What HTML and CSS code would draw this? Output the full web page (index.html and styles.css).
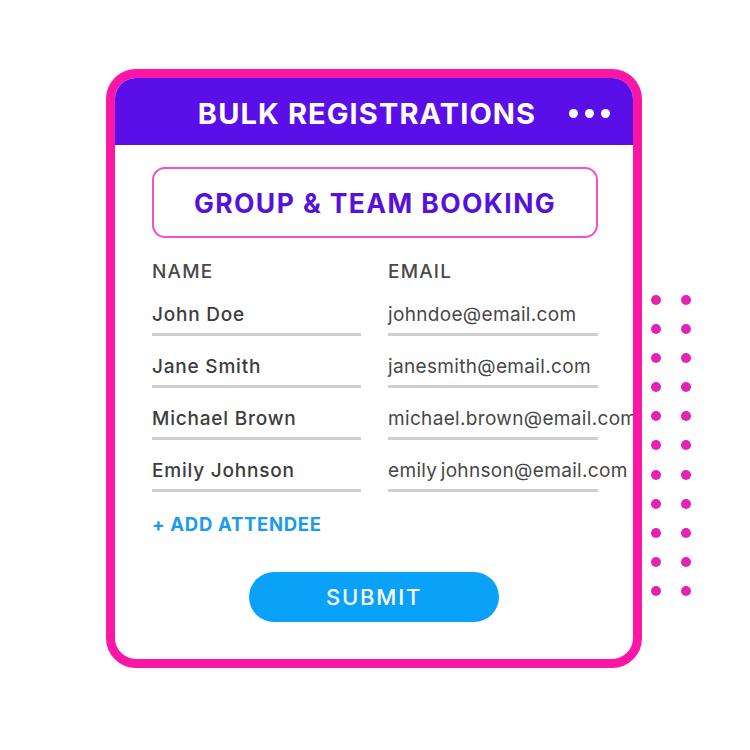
FILE: index.html
```html
<!DOCTYPE html>
<html>
<head>
<meta charset="utf-8">
<link rel="stylesheet" href="styles.css">
</head>
<body>
<div class="stage">
  <div class="card">
    <div class="header">
      <div class="title">BULK REGISTRATIONS</div>
      <div class="menu"><span></span><span></span><span></span></div>
    </div>
    <div class="body">
      <div class="badge">GROUP &amp; TEAM BOOKING</div>
      <div class="table">
        <div class="row head"><div class="cell">NAME</div><div class="cell">EMAIL</div></div>
        <div class="row"><div class="cell name">John Doe</div><div class="cell email">johndoe@email.com</div></div>
        <div class="row"><div class="cell name">Jane Smith</div><div class="cell email">janesmith@email.com</div></div>
        <div class="row"><div class="cell name">Michael Brown</div><div class="cell email">michael.brown@email.com</div></div>
        <div class="row"><div class="cell name">Emily Johnson</div><div class="cell email">emily<span class="tight"> </span>johnson@email.com</div></div>
        <div class="add">+ ADD ATTENDEE</div>
      </div>
      <div class="submit-wrap"><div class="submit">SUBMIT</div></div>
    </div>
  </div>
  <div class="dots">
    <span></span><span></span><span></span><span></span><span></span><span></span>
    <span></span><span></span><span></span><span></span><span></span><span></span>
    <span></span><span></span><span></span><span></span><span></span><span></span>
    <span></span><span></span><span></span><span></span>
  </div>
</div>
</body>
</html>
```

FILE: styles.css
```css
html, body {
  margin: 0;
  padding: 0;
  background: #ffffff;
}
body {
  font-family: Inter, "Open Sans", sans-serif;
}
.stage {
  position: relative;
  width: 750px;
  height: 750px;
  padding-top: 69px;
  padding-left: 106px;
  box-sizing: border-box;
}
.card {
  width: 536px;
  height: 599px;
  box-sizing: border-box;
  border: 9px solid #fb16a6;
  border-radius: 30px;
  background: #ffffff;
  overflow: hidden;
  display: flex;
  flex-direction: column;
}
.header {
  height: 67px;
  box-sizing: border-box;
  padding-top: 3px;
  background: #5a0fe8;
  display: flex;
  align-items: center;
  justify-content: center;
  position: relative;
  padding-right: 14px;
}
.title {
  color: #ffffff;
  font-weight: 700;
  font-size: 29px;
  letter-spacing: 1.1px;
}
.menu {
  position: absolute;
  right: 23px;
  top: 31px;
  display: flex;
  gap: 7px;
}
.menu span {
  width: 9px;
  height: 9px;
  border-radius: 50%;
  background: #ffffff;
}
.body {
  padding: 22px 35px 0 37px;
  display: flex;
  flex-direction: column;
}
.badge {
  height: 71px;
  box-sizing: border-box;
  border: 2.5px solid #f24ed6;
  border-radius: 13px;
  display: flex;
  align-items: center;
  justify-content: center;
  color: #5512dc;
  font-weight: 700;
  font-size: 26.5px;
  letter-spacing: 1.4px;
}
.table {
  margin-top: 22px;
  display: flex;
  flex-direction: column;
  gap: 19px;
}
.row {
  display: grid;
  grid-template-columns: 209px 210px;
  column-gap: 27px;
}
.cell {
  font-size: 19px;
  line-height: 24px;
  white-space: nowrap;
}
.head .cell {
  color: #484848;
  font-weight: 500;
  letter-spacing: 1.2px;
}
.name, .email {
  padding-bottom: 6px;
  border-bottom: 3px solid #cfcfcf;
}
.name {
  color: #3c3c3c;
  font-weight: 500;
  letter-spacing: 0.8px;
}
.email {
  color: #474747;
  font-weight: 400;
  letter-spacing: 0.33px;
}
.tight {
  letter-spacing: -2px;
}
.add {
  margin-top: 1px;
  color: #1a9bf0;
  font-weight: 700;
  font-size: 18.5px;
  line-height: 24px;
  letter-spacing: 0.7px;
}
.submit-wrap {
  margin-top: 36px;
  display: flex;
  justify-content: center;
  padding-right: 2px;
}
.submit {
  width: 250px;
  height: 50px;
  border-radius: 25px;
  background: #0aa1f8;
  color: #ffffff;
  font-size: 22px;
  font-weight: 500;
  letter-spacing: 1.8px;
  display: flex;
  align-items: center;
  justify-content: center;
}
.dots {
  position: absolute;
  left: 651px;
  top: 295px;
  display: grid;
  grid-template-columns: 10px 10px;
  column-gap: 20px;
  row-gap: 19.1px;
}
.dots span {
  width: 10px;
  height: 10px;
  border-radius: 50%;
  background: #e323b5;
}
```
